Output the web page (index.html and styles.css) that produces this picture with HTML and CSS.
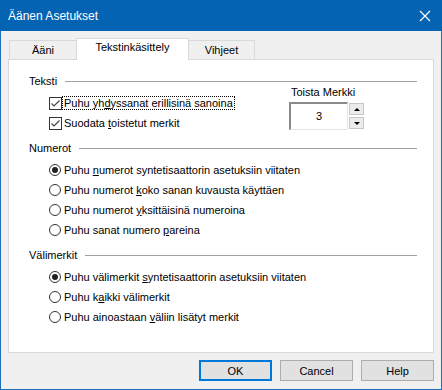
FILE: index.html
```html
<!DOCTYPE html>
<html lang="fi">
  <head>
    <meta charset="UTF-8" />
    <title>Äänen Asetukset</title>
    <link rel="stylesheet" href="styles.css">
  </head>
  <body>
    <div class="window">
      <!-- otsikkopalkki -->
      <div class="titlebar">
        <span class="title">Äänen Asetukset</span>
        <svg class="close" width="12" height="12" viewBox="0 0 12 12">
          <path d="M1 1 L11 11 M11 1 L1 11" stroke="#fff" stroke-width="1.1" fill="none" />
        </svg>
      </div>

      <!-- välilehdet -->
      <div class="tabs">
        <div class="tab tab-aani">Ääni</div>
        <div class="tab tab-teksti active">Tekstinkäsittely</div>
        <div class="tab tab-vihjeet">Vihjeet</div>
      </div>

      <div class="panel">
        <div class="group">
          <div class="group-head"><span>Teksti</span><div class="rule"></div></div>
          <div class="teksti-body">
            <div class="options teksti-options">
              <label class="row">
                <span class="check"><svg width="11" height="11" viewBox="0 0 11 11"><path d="M1.5 5.5 L4 8 L9.5 2.5" stroke="#444" stroke-width="1.2" fill="none" /></svg></span>
                <span class="focus">Puhu yh<u>d</u>yssanat erillisinä sanoina</span>
              </label>
              <label class="row">
                <span class="check"><svg width="11" height="11" viewBox="0 0 11 11"><path d="M1.5 5.5 L4 8 L9.5 2.5" stroke="#444" stroke-width="1.2" fill="none" /></svg></span>
                <span>Suodata <u>t</u>oistetut merkit</span>
              </label>
            </div>
            <div class="repeat">
              <div class="repeat-label">Toista Merkki</div>
              <div class="spin">
                <div class="spin-input">3</div>
                <div class="spin-buttons">
                  <div class="spin-btn up"><span class="tri-up"></span></div>
                  <div class="spin-btn down"><span class="tri-down"></span></div>
                </div>
              </div>
            </div>
          </div>
        </div>

        <div class="group">
          <div class="group-head"><span>Numerot</span><div class="rule"></div></div>
          <div class="options">
            <label class="row"><span class="radio checked"></span><span>Puhu <u>n</u>umerot syntetisaattorin asetuksiin viitaten</span></label>
            <label class="row"><span class="radio"></span><span>Puhu numerot <u>k</u>oko sanan kuvausta käyttäen</span></label>
            <label class="row"><span class="radio"></span><span>Puhu numerot <u>y</u>ksittäisinä numeroina</span></label>
            <label class="row"><span class="radio"></span><span>Puhu sanat numero <u>p</u>areina</span></label>
          </div>
        </div>

        <div class="group">
          <div class="group-head"><span>Välimerkit</span><div class="rule"></div></div>
          <div class="options">
            <label class="row"><span class="radio checked"></span><span>Puhu välimerkit <u>s</u>yntetisaattorin asetuksiin viitaten</span></label>
            <label class="row"><span class="radio"></span><span>Puhu k<u>a</u>ikki välimerkit</span></label>
            <label class="row"><span class="radio"></span><span>Puhu ainoastaan <u>v</u>äliin lisätyt merkit</span></label>
          </div>
        </div>
      </div>

      <div class="footer">
        <button class="btn default">OK</button>
        <button class="btn">Cancel</button>
        <button class="btn">Help</button>
      </div>
    </div>
  </body>
</html>
```

FILE: styles.css
```css
html,
body {
  margin: 0;
  padding: 0;
}

body {
  font-family: "Liberation Sans", Arial, sans-serif;
  font-size: 11px;
  color: #000;
  background-color: #f0f0f0;
}

.window {
  width: 442px;
  height: 390px;
  box-sizing: border-box;
  border: 1px solid #1c6fb8;
  border-top: none;
  background-color: #f0f0f0;
  display: flex;
  flex-direction: column;
}

.titlebar {
  height: 31px;
  margin: 0 -1px;
  background-color: #0563b4;
  color: #fff;
  display: flex;
  align-items: center;
  padding: 0 11px 0 8px;
  flex-shrink: 0;
}

.title {
  font-size: 12px;
  flex: 1;
}

.close {
  display: block;
}

/* välilehdet */
.tabs {
  display: flex;
  align-items: flex-end;
  height: 21px;
  margin-top: 7px;
  padding-left: 8px;
  position: relative;
  z-index: 1;
}

.tab {
  height: 19px;
  box-sizing: border-box;
  border: 1px solid #d9d9d9;
  border-bottom: none;
  background-color: #f0f0f0;
  text-align: center;
  line-height: 19px;
}

.tab-aani {
  width: 67px;
  border-right: none;
}

.tab-teksti {
  width: 113px;
}

.tab-vihjeet {
  width: 66px;
  border-left: none;
}

.tab.active {
  height: 22px;
  margin-bottom: -1px;
  background-color: #fff;
  line-height: 17px;
}

.panel {
  height: 294px;
  box-sizing: border-box;
  margin: 0 7px;
  border: 1px solid #d9d9d9;
  background-color: #fff;
  padding: 13px 16px 0 20px;
  flex-shrink: 0;
}

.group + .group {
  margin-top: 7px;
}

.group-head {
  display: flex;
  align-items: center;
  height: 16px;
}

.rule {
  flex: 1;
  margin-left: 8px;
  border-top: 1px solid #a0a0a0;
}

.options {
  margin-top: 4px;
  padding-left: 20px;
}

.row {
  display: flex;
  align-items: center;
  height: 20px;
}

.check {
  width: 13px;
  height: 13px;
  box-sizing: border-box;
  border: 1px solid #333;
  background-color: #fff;
  margin-right: 2px;
  flex-shrink: 0;
}

.check svg {
  display: block;
}

.radio {
  width: 12px;
  height: 12px;
  box-sizing: border-box;
  border: 1px solid #333;
  border-radius: 50%;
  background-color: #fff;
  margin-right: 3px;
  display: flex;
  align-items: center;
  justify-content: center;
  flex-shrink: 0;
}

.radio.checked::after {
  content: "";
  width: 6px;
  height: 6px;
  border-radius: 50%;
  background-color: #222;
}

.focus {
  outline: 1px dotted #000;
  outline-offset: 0;
  padding: 0 1px;
  margin-left: -1px;
}

/* toista merkki */
.teksti-body {
  display: flex;
}

.teksti-options {
  width: 240px;
}

.repeat {
  margin-top: -4px;
}

.repeat-label {
  line-height: 14px;
  padding-left: 2px;
}

.spin {
  display: flex;
  margin-top: 3px;
}

.spin-input {
  width: 59px;
  height: 28px;
  box-sizing: border-box;
  border-top: 2px solid #8a8a8a;
  border-left: 2px solid #8a8a8a;
  border-right: 1px solid #e3e3e3;
  border-bottom: 1px solid #e3e3e3;
  background-color: #fff;
  text-align: center;
  line-height: 25px;
}

.spin-buttons {
  display: flex;
  flex-direction: column;
  gap: 2px;
  margin-left: 1px;
  padding-top: 1px;
}

.spin-btn {
  width: 15px;
  height: 12px;
  box-sizing: border-box;
  border: 1px solid #c8c8c8;
  background-color: #ececec;
  display: flex;
  align-items: center;
  justify-content: center;
}

.tri-up {
  border-left: 3px solid transparent;
  border-right: 3px solid transparent;
  border-bottom: 3px solid #000;
}

.tri-down {
  border-left: 3px solid transparent;
  border-right: 3px solid transparent;
  border-top: 3px solid #000;
}

.footer {
  display: flex;
  justify-content: flex-end;
  gap: 8px;
  padding: 7px 7px 0 0;
}

.btn {
  width: 73px;
  height: 21px;
  font-family: "Liberation Sans", Arial, sans-serif;
  font-size: 11px;
  color: #000;
  background-color: #e1e1e1;
  border: 1px solid #adadad;
  padding: 0;
}

.btn.default {
  border: 2px solid #0078d7;
}
```
